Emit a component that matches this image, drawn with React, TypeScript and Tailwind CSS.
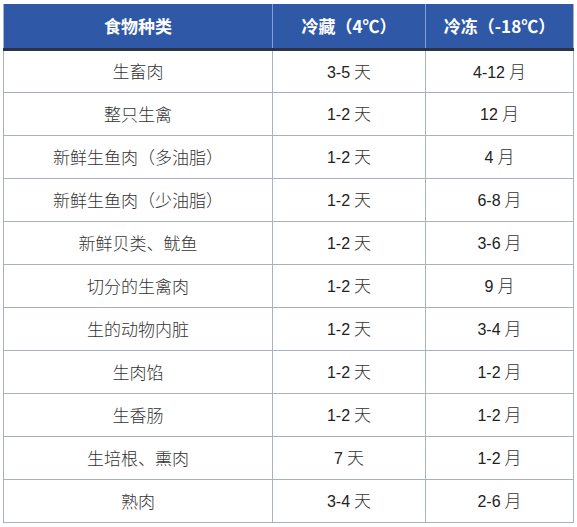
const rows: [string, string, string][] = [
  ["生畜肉", "3-5 天", "4-12 月"],
  ["整只生禽", "1-2 天", "12 月"],
  ["新鲜生鱼肉（多油脂）", "1-2 天", "4 月"],
  ["新鲜生鱼肉（少油脂）", "1-2 天", "6-8 月"],
  ["新鲜贝类、鱿鱼", "1-2 天", "3-6 月"],
  ["切分的生禽肉", "1-2 天", "9 月"],
  ["生的动物内脏", "1-2 天", "3-4 月"],
  ["生肉馅", "1-2 天", "1-2 月"],
  ["生香肠", "1-2 天", "1-2 月"],
  ["生培根、熏肉", "7 天", "1-2 月"],
  ["熟肉", "3-4 天", "2-6 月"],
];

function NumText({ text }: { text: string }) {
  const [num, unit] = text.split(" ");
  return (
    <span>
      <span className="font-['Liberation_Sans',sans-serif] text-[16px] text-[#222]">{num}</span>
      <span className="ml-[4px] font-light text-[17px] text-[#333]">{unit}</span>
    </span>
  );
}

export default function App() {
  return (
    <div className="w-[577px] h-[527px] bg-white pl-[3px] pt-[4px] font-['Noto_Sans_CJK_SC',sans-serif]">
      <table className="w-[570px] border-collapse table-fixed">
        <colgroup>
          <col className="w-[269px]" />
          <col className="w-[153px]" />
          <col className="w-[148px]" />
        </colgroup>
        <thead>
          <tr className="h-[45px] bg-[#2f59a6] text-white font-bold text-[17px] border-b-[3px] border-b-[#2b3346]">
            <th className="border-r border-r-[#7fa0d8] border-l border-l-[#a9b1bd]">食物种类</th>
            <th className="border-r border-r-[#7fa0d8]">冷藏（4℃）</th>
            <th className="border-r border-r-[#a9b1bd]">冷冻（-18℃）</th>
          </tr>
        </thead>
        <tbody>
          {rows.map(([food, fridge, freezer]) => (
            <tr key={food} className="h-[43px]">
              <td className="border border-[#a9b1bd] text-center font-light text-[17px] text-[#333]">{food}</td>
              <td className="border border-[#a9b1bd] text-center">
                <NumText text={fridge} />
              </td>
              <td className="border border-[#a9b1bd] text-center">
                <NumText text={freezer} />
              </td>
            </tr>
          ))}
        </tbody>
      </table>
    </div>
  );
}
